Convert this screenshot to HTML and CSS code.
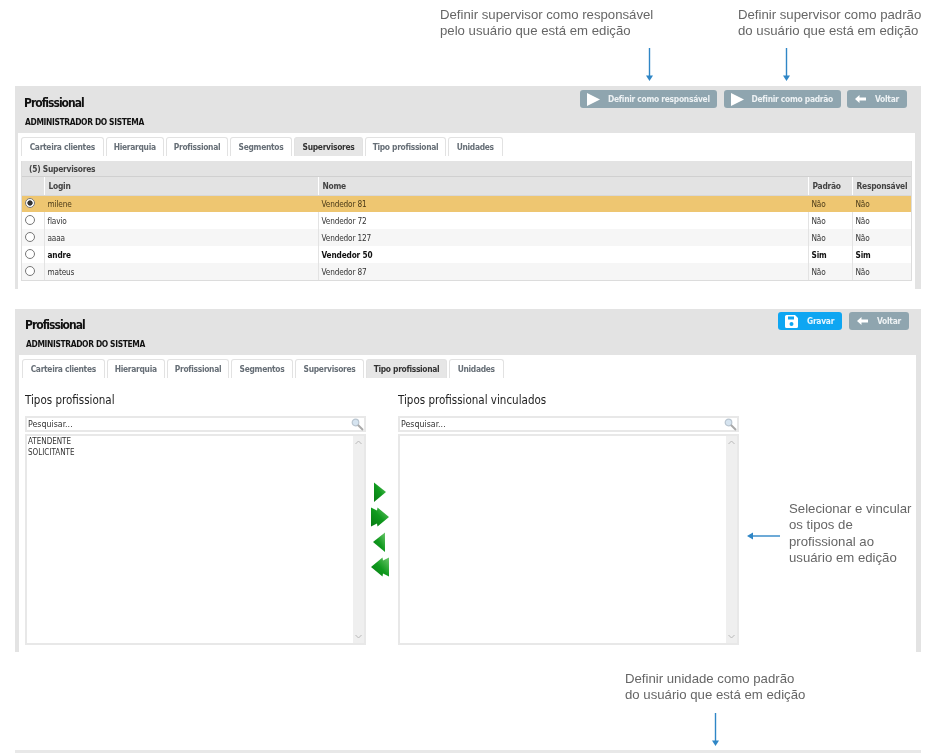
FILE: index.html
```html
<!DOCTYPE html>
<html lang="pt">
<head>
<meta charset="utf-8">
<title>Profissional</title>
<link rel="stylesheet" href="styles.css">
</head>
<body>
<div class="page">
  <section class="notes-top">
    <div class="callout callout-resp">
      <p class="note">Definir supervisor como responsável<br>pelo usuário que está em edição</p>
      <svg class="arrow-down" width="9" height="34" viewBox="0 0 9 34"><path d="M4.5 0V28" stroke="#2f86c6" stroke-width="1.4"/><path d="M1 27.5H8L4.5 33Z" fill="#2f86c6"/></svg>
    </div>
    <div class="callout callout-pad">
      <p class="note">Definir supervisor como padrão<br>do usuário que está em edição</p>
      <svg class="arrow-down" width="9" height="34" viewBox="0 0 9 34"><path d="M4.5 0V28" stroke="#2f86c6" stroke-width="1.4"/><path d="M1 27.5H8L4.5 33Z" fill="#2f86c6"/></svg>
    </div>
  </section>

  <section class="panel panel-one">
    <header class="panel-head">
      <div class="titles">
        <h1 class="title">Profissional</h1>
        <h2 class="subtitle">ADMINISTRADOR DO SISTEMA</h2>
      </div>
      <div class="actions">
        <button class="btn btn-resp"><svg width="13" height="13" viewBox="0 0 13 13"><path d="M0 0L13 6.5L0 13Z" fill="#fff"/></svg><span>Definir como responsável</span></button>
        <button class="btn btn-pad"><svg width="13" height="13" viewBox="0 0 13 13"><path d="M0 0L13 6.5L0 13Z" fill="#fff"/></svg><span>Definir como padrão</span></button>
        <button class="btn btn-back"><svg width="11" height="8" viewBox="0 0 11 8"><path d="M0 4L4.5 0V2.5H11V5.5H4.5V8Z" fill="#fff"/></svg><span>Voltar</span></button>
      </div>
    </header>
    <div class="panel-body">
      <nav class="tabs">
        <a class="tab t1">Carteira clientes</a><a class="tab t2">Hierarquia</a><a class="tab t3">Profissional</a><a class="tab t4">Segmentos</a><a class="tab t5 active">Supervisores</a><a class="tab t6">Tipo profissional</a><a class="tab t7">Unidades</a>
      </nav>
      <div class="grid-wrap">
        <div class="grid-caption">(5) Supervisores</div>
        <table class="grid">
          <colgroup><col class="c-radio"><col class="c-login"><col><col class="c-pad"><col class="c-resp"></colgroup>
          <thead><tr><th></th><th>Login</th><th>Nome</th><th>Padrão</th><th>Responsável</th></tr></thead>
          <tbody>
            <tr class="selected"><td><span class="radio on"></span></td><td>milene</td><td>Vendedor 81</td><td>Não</td><td>Não</td></tr>
            <tr><td><span class="radio"></span></td><td>flavio</td><td>Vendedor 72</td><td>Não</td><td>Não</td></tr>
            <tr class="alt"><td><span class="radio"></span></td><td>aaaa</td><td>Vendedor 127</td><td>Não</td><td>Não</td></tr>
            <tr class="strong"><td><span class="radio"></span></td><td>andre</td><td>Vendedor 50</td><td>Sim</td><td>Sim</td></tr>
            <tr class="alt"><td><span class="radio"></span></td><td>mateus</td><td>Vendedor 87</td><td>Não</td><td>Não</td></tr>
          </tbody>
        </table>
      </div>
    </div>
  </section>

  <section class="panel panel-two">
    <header class="panel-head">
      <div class="titles">
        <h1 class="title">Profissional</h1>
        <h2 class="subtitle">ADMINISTRADOR DO SISTEMA</h2>
      </div>
      <div class="actions">
        <button class="btn btn-save"><svg width="13" height="13" viewBox="0 0 13 13"><path fill="#fff" fill-rule="evenodd" d="M1.5 0H10L13 3V11.5A1.5 1.5 0 0 1 11.5 13H1.5A1.5 1.5 0 0 1 0 11.5V1.5A1.5 1.5 0 0 1 1.5 0ZM3 1.5V4.5H9V1.5ZM6.5 7A2 2 0 1 0 6.5 11A2 2 0 1 0 6.5 7Z"/></svg><span>Gravar</span></button>
        <button class="btn btn-back"><svg width="11" height="8" viewBox="0 0 11 8"><path d="M0 4L4.5 0V2.5H11V5.5H4.5V8Z" fill="#fff"/></svg><span>Voltar</span></button>
      </div>
    </header>
    <div class="panel-body">
      <nav class="tabs">
        <a class="tab t1">Carteira clientes</a><a class="tab t2">Hierarquia</a><a class="tab t3">Profissional</a><a class="tab t4">Segmentos</a><a class="tab t5">Supervisores</a><a class="tab t6 active">Tipo profissional</a><a class="tab t7">Unidades</a>
      </nav>
      <div class="picker">
        <div class="pick-col">
          <h3 class="pick-title">Tipos profissional</h3>
          <div class="search"><span>Pesquisar...</span><svg width="13" height="13" viewBox="0 0 13 13"><circle cx="4.5" cy="4.5" r="3.3" fill="#d6e4f0" stroke="#b9c5d0" stroke-width="1.2"/><path d="M7 7L12 12" stroke="#a9a9a9" stroke-width="2"/></svg></div>
          <div class="listbox">
            <div class="items"><div>ATENDENTE</div><div>SOLICITANTE</div></div>
            <div class="scroll"><svg width="7" height="5" viewBox="0 0 7 5"><path d="M.5 4L3.5 1L6.5 4" fill="none" stroke="#b8b8b8"/></svg><svg width="7" height="5" viewBox="0 0 7 5"><path d="M.5 1L3.5 4L6.5 1" fill="none" stroke="#b8b8b8"/></svg></div>
          </div>
        </div>
        <div class="movers">
          <svg class="mv" width="20" height="20" viewBox="0 0 20 20"><defs><linearGradient id="g" x1="1" y1="0" x2="0" y2="1"><stop offset="0" stop-color="#6cc76c"/><stop offset=".5" stop-color="#109a1e"/><stop offset="1" stop-color="#067a12"/></linearGradient></defs><path d="M4 0.5L16 10L4 20Z" fill="url(#g)"/></svg>
          <svg class="mv" width="20" height="20" viewBox="0 0 20 20"><path d="M1 0.5L7 3.5L7.5 0.5L19 10L7.5 19.5L7 16.5L1 19.5Z" fill="url(#g)"/></svg>
          <svg class="mv" width="20" height="20" viewBox="0 0 20 20"><path d="M15 0.5L3 10L15 20Z" fill="url(#g)"/></svg>
          <svg class="mv" width="20" height="20" viewBox="0 0 20 20"><path d="M19 0.5L13 3.5L12.5 0.5L1 10L12.5 19.5L13 16.5L19 19.5Z" fill="url(#g)"/></svg>
        </div>
        <div class="pick-col">
          <h3 class="pick-title">Tipos profissional vinculados</h3>
          <div class="search"><span>Pesquisar...</span><svg width="13" height="13" viewBox="0 0 13 13"><circle cx="4.5" cy="4.5" r="3.3" fill="#d6e4f0" stroke="#b9c5d0" stroke-width="1.2"/><path d="M7 7L12 12" stroke="#a9a9a9" stroke-width="2"/></svg></div>
          <div class="listbox">
            <div class="items"></div>
            <div class="scroll"><svg width="7" height="5" viewBox="0 0 7 5"><path d="M.5 4L3.5 1L6.5 4" fill="none" stroke="#b8b8b8"/></svg><svg width="7" height="5" viewBox="0 0 7 5"><path d="M.5 1L3.5 4L6.5 1" fill="none" stroke="#b8b8b8"/></svg></div>
          </div>
        </div>
        <div class="side-callout">
          <svg width="34" height="8" viewBox="0 0 34 8"><path d="M5 4H33" stroke="#2f86c6" stroke-width="1.4"/><path d="M6 .5V7.5L0 4Z" fill="#2f86c6"/></svg>
          <p class="note">Selecionar e vincular<br>os tipos de<br>profissional ao<br>usuário em edição</p>
        </div>
      </div>
    </div>
  </section>

  <section class="notes-bottom">
    <div class="callout callout-unit">
      <p class="note">Definir unidade como padrão<br>do usuário que está em edição</p>
      <svg class="arrow-down" width="9" height="34" viewBox="0 0 9 34"><path d="M4.5 0V28" stroke="#2f86c6" stroke-width="1.4"/><path d="M1 27.5H8L4.5 33Z" fill="#2f86c6"/></svg>
    </div>
  </section>
  <div class="next-panel"></div>
</div>
</body>
</html>
```

FILE: styles.css
```css
* { box-sizing: border-box; }
html, body { margin: 0; padding: 0; background: #fff; }
body { width: 928px; height: 753px; overflow: hidden; }
.page { filter: blur(.45px); font-family: "DejaVu Sans Condensed", "DejaVu Sans", sans-serif; color: #222; }

.note { margin: 0; font: 13.2px/16.3px "Liberation Sans", Arial, sans-serif; color: #666; white-space: nowrap; }
.callout { position: relative; }
.arrow-down { display: block; }

.notes-top { height: 86px; display: flex; padding: 7px 0 0 440px; }
.callout-resp { width: 298px; }
.callout-resp .arrow-down { margin: 8px 0 0 205px; }
.callout-pad .arrow-down { margin: 8px 0 0 44px; }

.panel { margin-left: 15px; width: 906px; background: #e3e3e3; padding: 0 6px 0 3px; }
.panel-one { height: 203px; }
.panel-two { height: 343px; margin-top: 20px; padding-left: 4px; padding-right: 5px; }

.panel-head { height: 47px; display: flex; justify-content: space-between; }
.panel-two .panel-head { height: 46px; }
.titles { padding: 10px 0 0 6px; }
.panel-two .titles { padding-top: 9px; }
.title { margin: 0; font-size: 12px; line-height: 15px; font-weight: 700; color: #111; letter-spacing: -1px; }
.subtitle { margin: 5.5px 0 0 1px; font-size: 8.4px; line-height: 11px; font-weight: 700; color: #111; letter-spacing: -.35px; }
.actions { display: flex; gap: 6.5px; padding: 4px 8px 0 0; }
.panel-two .actions { gap: 7px; padding: 3px 7px 0 0; }

.btn { height: 18px; border: 0; border-radius: 3px; padding: 0; background: #8fa5af; color: #eef2f4; font: 700 8.4px/18px "DejaVu Sans Condensed", "DejaVu Sans", sans-serif; letter-spacing: -.27px; display: flex; align-items: center; }
.btn svg { flex: none; }
.btn-resp { width: 137px; padding-left: 7px; gap: 8px; }
.btn-pad { width: 117px; padding-left: 7px; gap: 8px; }
.btn-back { width: 60px; padding-left: 8px; gap: 9px; }
.btn-save { width: 64px; padding-left: 7px; gap: 9px; background: #0ea6f2; color: #e8f6fe; }

.panel-body { background: #fff; height: calc(100% - 47px); padding: 4px 3px 0; }
.panel-two .panel-body { height: calc(100% - 46px); padding: 4px 3px 0; }

.tabs { height: 19px; display: flex; gap: 2px; }
.tab { display: block; height: 19px; border: 1px solid #e2e2e2; border-bottom: 0; border-radius: 3px 3px 0 0; background: #fff; font-size: 8.4px; line-height: 18px; font-weight: 700; color: #666e76; letter-spacing: -.3px; text-align: center; white-space: nowrap; }
.tab.active { background: #e6e6e6; color: #333; }
.t1 { width: 82.5px; } .t2 { width: 58.5px; } .t3 { width: 62px; } .t4 { width: 62px; } .t5 { width: 69px; } .t6 { width: 81px; } .t7 { width: 54.5px; }

.grid-wrap { margin-top: 5px; width: 891px; border: 1px solid #dcdcdc; border-top: 0; }
.grid-caption { height: 16px; background: #e3e3e3; font-size: 8.4px; line-height: 16px; font-weight: 700; color: #444; padding-left: 7px; letter-spacing: -.25px; border-bottom: 1px solid #d0d0d0; }
.grid { width: 100%; border-collapse: collapse; table-layout: fixed; font-size: 8.2px; letter-spacing: -.15px; color: #333; }
.c-radio { width: 22px; } .c-login { width: 274px; } .c-pad { width: 44px; } .c-resp { width: 59px; }
.grid th { height: 18px; padding: 0 0 0 4px; background: #e3e3e3; border-left: 1px solid #fff; border-bottom: 1px solid #d8d8d8; text-align: left; font-size: 8.4px; font-weight: 700; color: #444; letter-spacing: -.25px; }
.grid th:first-child { border-left: 0; }
.grid td { height: 17px; padding: 0 0 0 3px; border-left: 1px solid #e3e3e3; white-space: nowrap; }
.grid td:first-child { border-left: 0; padding-left: 3px; }
.grid .selected td { background: #eec671; border-left-color: #eec671; color: #4a3a18; }
.grid .alt td { background: #f6f6f6; }
.grid .strong td { font-weight: 700; color: #111; }
.radio { display: block; width: 10px; height: 10px; border: 1px solid #777; border-radius: 50%; background: #fff; margin: -2px 0 0 0; }
.radio.on { background: radial-gradient(circle, #333 0 2.3px, #fff 3px); }

.picker { display: flex; align-items: flex-start; padding: 0 0 0 3px; }
.pick-col { width: 341px; }
.pick-title { margin: 0; padding-top: 15px; height: 38px; font-size: 11.5px; line-height: 15px; font-weight: 400; color: #222; white-space: nowrap; }
.search { height: 16px; border: 2px solid #e8e8e8; display: flex; align-items: center; justify-content: space-between; padding: 0 0 0 1px; font-size: 8.8px; color: #333; }
.listbox { height: 211px; margin-top: 2px; border: 2px solid #e8e8e8; display: flex; }
.items { flex: 1; padding: 1px; font-size: 8px; line-height: 10.5px; color: #333; }
.scroll { width: 11px; background: #efefef; display: flex; flex-direction: column; justify-content: space-between; align-items: center; padding: 4px 0; }
.scroll svg { display: block; }
.movers { width: 32px; display: flex; flex-direction: column; gap: 5px; align-items: center; padding: 104px 4px 0 0; }
.mv { display: block; }
.side-callout { display: flex; align-items: flex-start; gap: 8px; padding: 123px 0 0 8px; }
.side-callout svg { margin-top: 31px; flex: none; }

.notes-bottom { height: 98px; padding: 18.5px 0 0 625px; }
.callout-unit .arrow-down { margin: 9.5px 0 0 86px; }
.next-panel { height: 3px; margin-left: 15px; width: 906px; background: #e8e8e8; }
```
